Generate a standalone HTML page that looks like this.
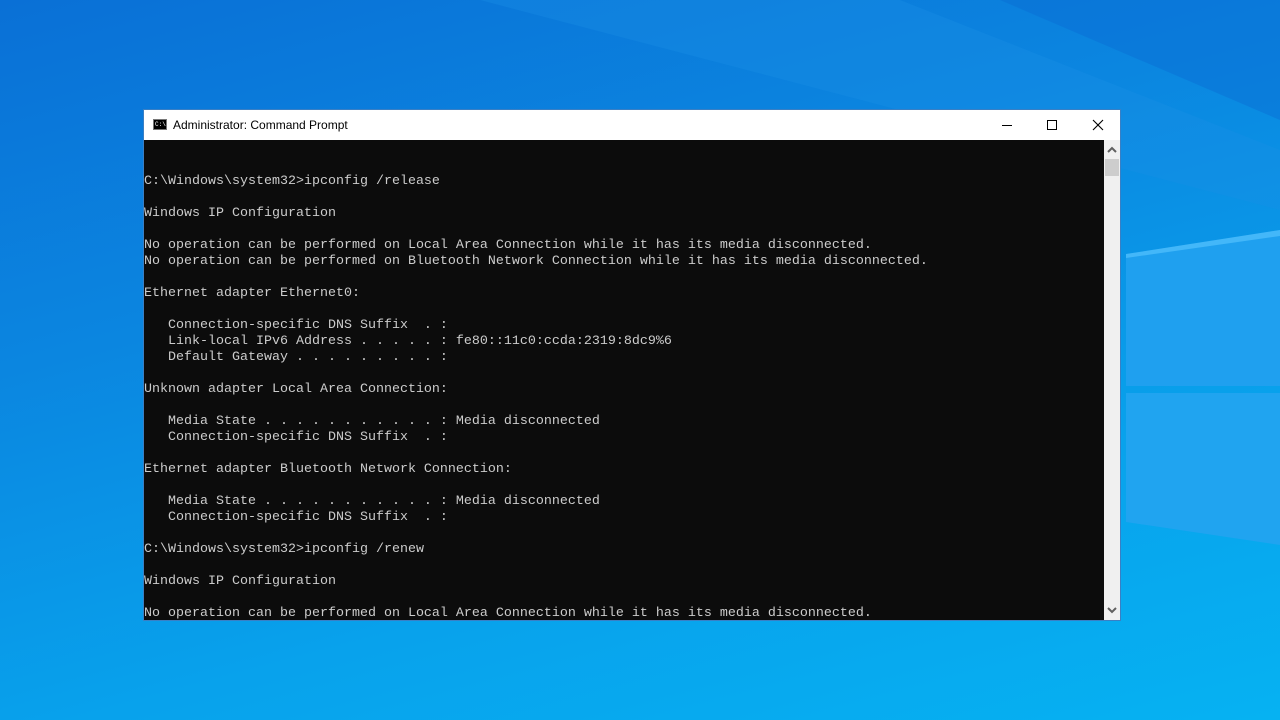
<!DOCTYPE html>
<html><head><meta charset="utf-8"><style>
html,body{margin:0;padding:0;width:1280px;height:720px;overflow:hidden;font-family:"Liberation Sans",sans-serif}
body{background:linear-gradient(165deg,#0a70d6 0%,#0b86e0 35%,#08a2ec 70%,#06b2f2 100%);position:relative}
svg.bg{position:absolute;left:0;top:0}
.win{position:absolute;left:143px;top:109px;width:976px;height:510px;border:1px solid #3a7fc4;background:#0c0c0c}
.title{position:absolute;left:0;top:0;width:976px;height:30px;background:#fff}
.title .t{position:absolute;left:29px;top:8px;font-size:12px;color:#000}
.ico{position:absolute;left:9px;top:9px;width:14px;height:11px;background:#000;border:1px solid #777;box-sizing:border-box;color:#fff;font-size:6px;line-height:9px;font-family:"Liberation Mono",monospace;padding-left:1px}
.con{position:absolute;left:0;top:30px;width:960px;height:480px;background:#0c0c0c;overflow:hidden}
pre{margin:0;font-family:"Liberation Mono",monospace;font-size:13.33px;line-height:16px;color:#cccccc;position:absolute;left:0;top:2px}
.sb{position:absolute;left:960px;top:30px;width:16px;height:480px;background:#f0f0f0}
.thumb{position:absolute;left:1px;top:19px;width:14px;height:17px;background:#cdcdcd}
</style></head><body>
<svg class="bg" width="1280" height="720">
<polygon points="480,0 900,0 1280,150 1280,210" fill="#1a8fe6" opacity="0.35"/>
<polygon points="1126,254 1280,230 1280,386 1126,386" fill="#1fa0ef"/>
<polygon points="1126,393 1280,393 1280,545 1126,522" fill="#20a4f0"/>
<polygon points="1126,254 1280,230 1280,236 1126,258" fill="#5cc6ff" opacity="0.6"/>
<polygon points="1000,0 1280,0 1280,120" fill="#0a6ad2" opacity="0.4"/>
</svg>
<div class="win">
<div class="title"><div class="ico">C:\</div><div class="t">Administrator: Command Prompt</div>
<svg style="position:absolute;left:850px;top:8px" width="120" height="15">
<line x1="8" y1="7.5" x2="18" y2="7.5" stroke="#000" stroke-width="1"/>
<rect x="53.5" y="2.5" width="9" height="9" fill="none" stroke="#000" stroke-width="1"/>
<line x1="99" y1="2" x2="109" y2="12" stroke="#000" stroke-width="1.1"/>
<line x1="109" y1="2" x2="99" y2="12" stroke="#000" stroke-width="1.1"/>
</svg></div>
<div class="con"><pre>
&nbsp;

C:\Windows\system32>ipconfig /release

Windows IP Configuration

No operation can be performed on Local Area Connection while it has its media disconnected.
No operation can be performed on Bluetooth Network Connection while it has its media disconnected.

Ethernet adapter Ethernet0:

   Connection-specific DNS Suffix  . :
   Link-local IPv6 Address . . . . . : fe80::11c0:ccda:2319:8dc9%6
   Default Gateway . . . . . . . . . :

Unknown adapter Local Area Connection:

   Media State . . . . . . . . . . . : Media disconnected
   Connection-specific DNS Suffix  . :

Ethernet adapter Bluetooth Network Connection:

   Media State . . . . . . . . . . . : Media disconnected
   Connection-specific DNS Suffix  . :

C:\Windows\system32>ipconfig /renew

Windows IP Configuration

No operation can be performed on Local Area Connection while it has its media disconnected.</pre></div>
<div class="sb"><div class="thumb"></div>
<svg style="position:absolute;left:0;top:0" width="16" height="480">
<polyline points="4,12 8,8 12,12" fill="none" stroke="#606060" stroke-width="2"/>
<polyline points="4,468 8,472 12,468" fill="none" stroke="#606060" stroke-width="2"/>
</svg></div>
</div>
</body></html>
